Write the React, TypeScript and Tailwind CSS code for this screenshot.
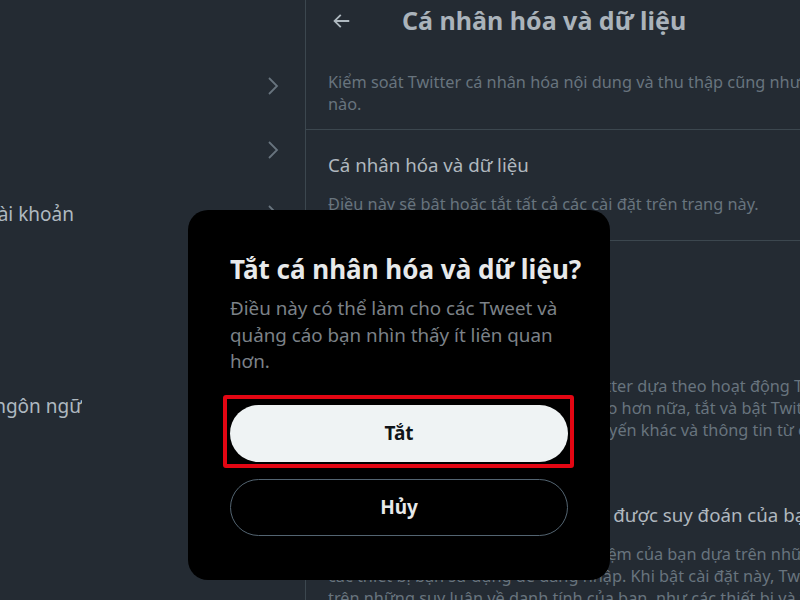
import { ReactNode } from "react";

const font = { fontFamily: '"Noto Sans", "Open Sans", sans-serif' };

const Chevron = () => (
  <svg width="12" height="20" viewBox="0 0 12 20" fill="none" className="text-[#68747e]">
    <path d="M2 2l8 8-8 8" stroke="currentColor" strokeWidth="1.8" />
  </svg>
);

const BackArrow = () => (
  <svg width="22" height="22" viewBox="0 0 24 24" fill="currentColor" className="text-[#afb9c0]">
    <path d="M7.414 13l5.043 5.04-1.414 1.42L3.586 12l7.457-7.46 1.414 1.42L7.414 11H21v2H7.414z" />
  </svg>
);

// left menu row; label is clipped on the left like the screenshot
const MenuRow = ({ label, clip, chevron = true }: { label?: string; clip: string; chevron?: boolean }) => (
  <div className="h-[64px] flex items-center">
    <div className={`${clip} overflow-hidden flex justify-end`}>
      {label && <span className="whitespace-nowrap text-[19px] text-[#afb9c0]">{label}</span>}
    </div>
    <div className="flex-1" />
    {chevron && (
      <div className="w-[12px] mr-[26px]">
        <Chevron />
      </div>
    )}
  </div>
);

const Line = ({ children }: { children: ReactNode }) => (
  <div className="whitespace-nowrap h-[22px] leading-[22px] text-[16.3px] text-[#68747e]">{children}</div>
);

const ItemTitle = ({ children }: { children: ReactNode }) => (
  <div className="whitespace-nowrap h-[24px] leading-[24px] text-[18.7px] text-[#b0b8bf]">{children}</div>
);

export default function App() {
  return (
    <div className="relative w-[800px] h-[600px] overflow-hidden bg-[#242b33]" style={font}>
      <div className="flex h-full">
        {/* left settings menu */}
        <div className="w-[306px] shrink-0 border-r border-[#3c474f] pt-[54px]">
          <MenuRow clip="w-[0px]" />
          <MenuRow clip="w-[0px]" />
          <MenuRow label="Thông tin tài khoản" clip="w-[74px]" />
          <MenuRow clip="w-[0px]" />
          <MenuRow clip="w-[0px]" />
          <MenuRow label="Khả năng truy cập, hiển thị và ngôn ngữ" clip="w-[82px]" chevron={false} />
        </div>

        {/* right detail pane */}
        <div className="flex-1 min-w-0 overflow-hidden">
          <div className="h-[41px] flex items-center pl-[24px]">
            <BackArrow />
            <div className="ml-[50px] whitespace-nowrap text-[25px] font-bold text-[#aab3bb]">Cá nhân hóa và dữ liệu</div>
          </div>

          <div className="pl-[22px] pt-[30px] pb-[14px] border-b border-[#3c474f]">
            <Line>Kiểm soát Twitter cá nhân hóa nội dung và thu thập cũng như chia sẻ dữ liệu của bạn như thế</Line>
            <Line>nào.</Line>
          </div>

          <div className="pl-[22px] pt-[23px] pb-[25px] border-b border-[#3c474f]">
            <ItemTitle>Cá nhân hóa và dữ liệu</ItemTitle>
            <div className="h-[16px]" />
            <Line>Điều này sẽ bật hoặc tắt tất cả các cài đặt trên trang này.</Line>
          </div>

          <div className="pl-[22px] pt-[94px]">
            <ItemTitle>Quảng cáo được cá nhân hóa</ItemTitle>
            <div className="h-[16px]" />
            <Line>Bạn sẽ luôn thấy quảng cáo trên Twitter dựa theo hoạt động Twitter của bạn.</Line>
            <Line>Để những quảng cáo có liên quan cao hơn nữa, tắt và bật Twitter cá nhân hóa quảng cáo</Line>
            <Line>kết hợp dữ liệu với hoạt động trực tuyến khác và thông tin từ các đối tác.</Line>
          </div>

          <div className="pl-[22px] pt-[62px]">
            <ItemTitle>Cá nhân hóa dựa trên danh tính được suy đoán của bạn</ItemTitle>
            <div className="h-[16px]" />
            <Line>Twitter sẽ luôn cá nhân hóa trải nghiệm của bạn dựa trên những thông tin</Line>
            <Line>các thiết bị bạn sử dụng để đăng nhập. Khi bật cài đặt này, Twitter cũng có thể</Line>
            <Line>trên những suy luận về danh tính của bạn, như các thiết bị và trình duyệt</Line>
          </div>
        </div>
      </div>

      {/* confirmation dialog */}
      <div className="absolute left-[188px] top-[210px] w-[422px] h-[370px] bg-black rounded-[20px] px-[42px] pt-[43px]">
        <div className="text-[26px] leading-[32px] font-bold text-[#e7e9ea] whitespace-nowrap">Tắt cá nhân hóa và dữ liệu?</div>
        <p className="mt-[10px] text-[18.8px] leading-[26.5px] text-[#7c8288]">
          Điều này có thể làm cho các Tweet và quảng cáo bạn nhìn thấy ít liên quan hơn.
        </p>
        <div className="relative mt-[30px]">
          <div className="absolute -left-[7px] -right-[6px] -top-[10px] -bottom-[6px] border-[4px] border-[#e30613] rounded-[3px]" />
          <button className="relative w-full h-[57px] rounded-full bg-[#eff3f4] text-[#0f1419] text-[19px] font-bold">Tắt</button>
        </div>
        <button className="mt-[17px] w-full h-[57px] rounded-full border border-[#536471] text-[#e7e9ea] text-[19px] font-bold">Hủy</button>
      </div>
    </div>
  );
}
